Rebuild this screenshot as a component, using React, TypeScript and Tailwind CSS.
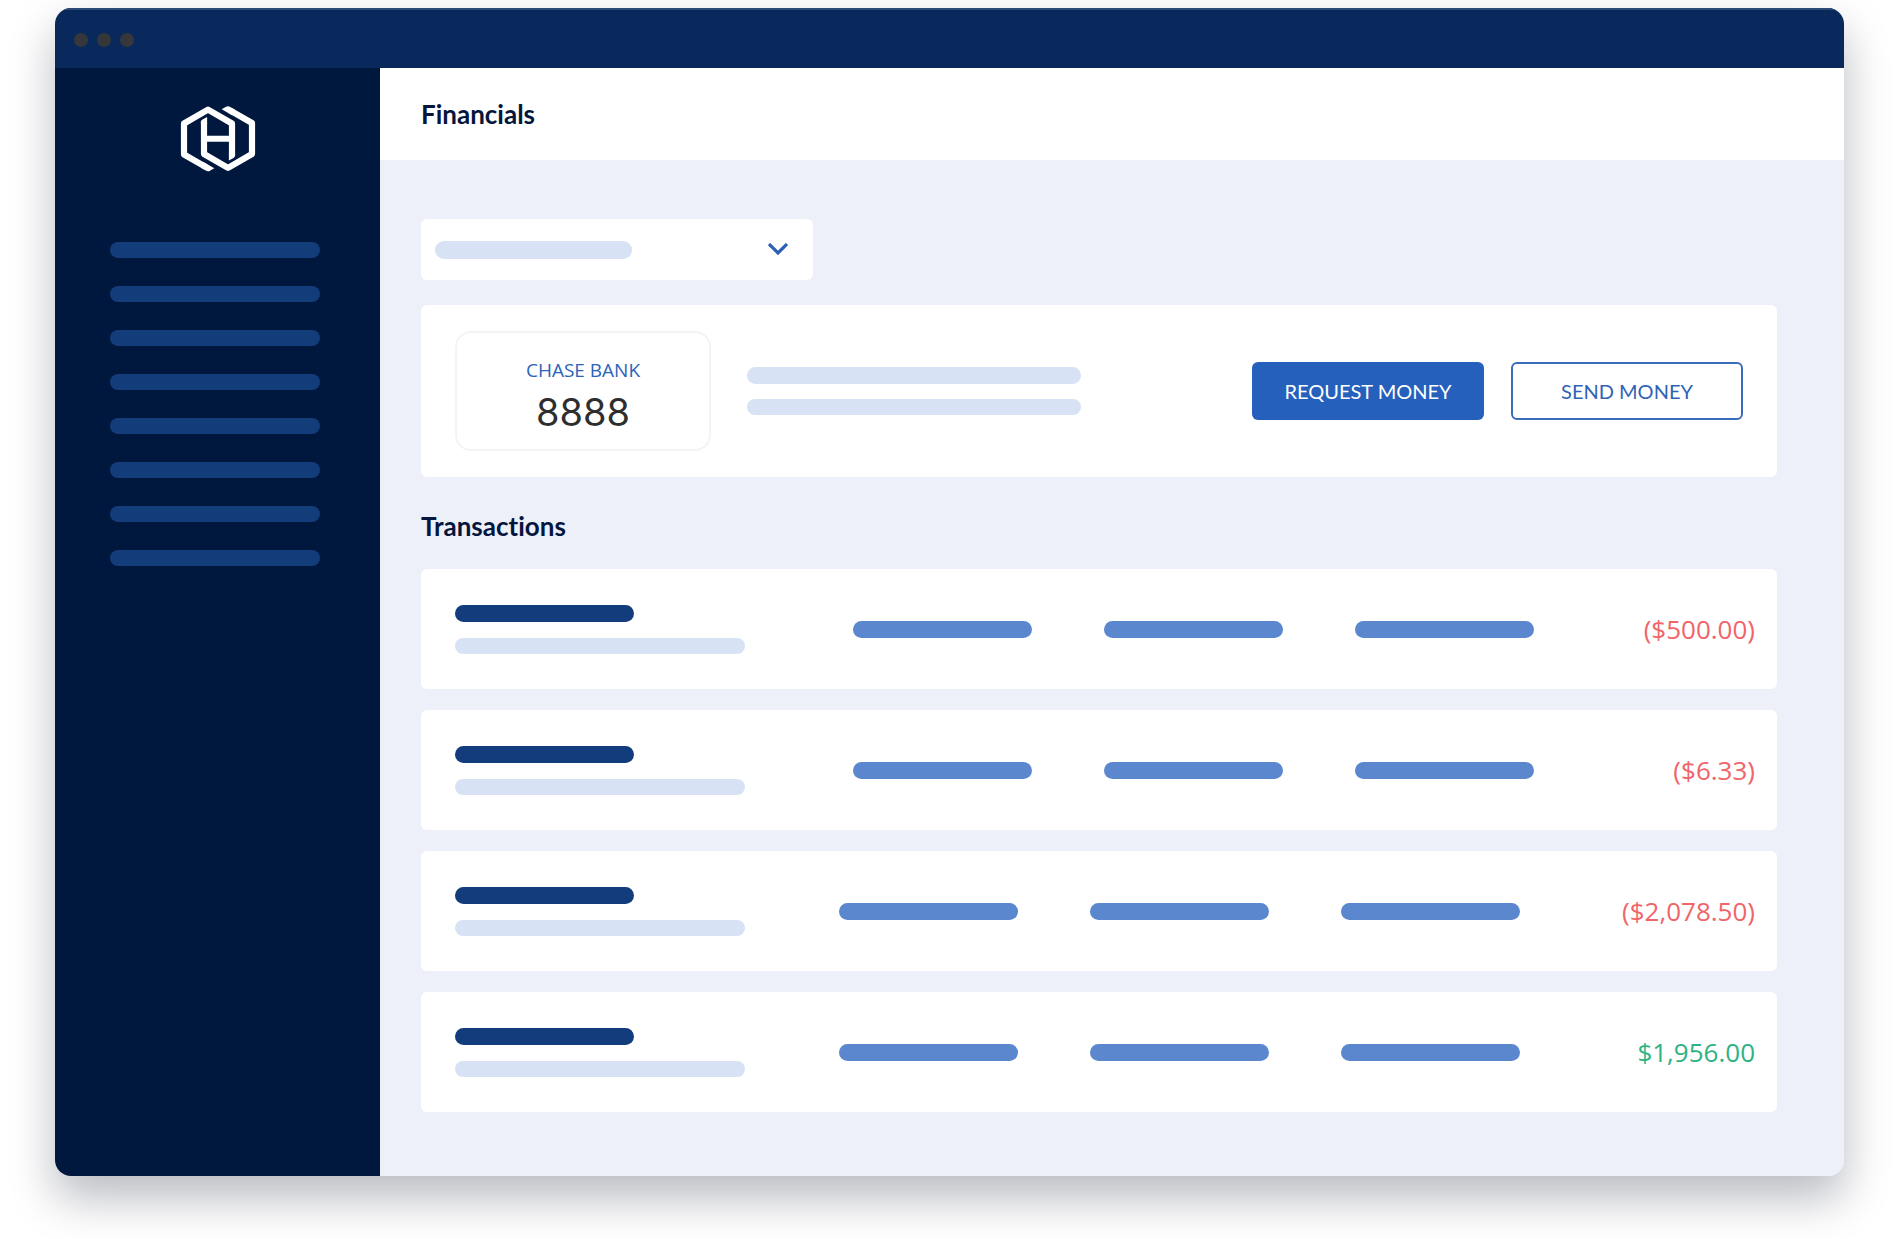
type Transaction = {
  id: number;
  amount: string;
  tone: string;
  amountColumn: string;
};

const transactions: Transaction[] = [
  { id: 1, amount: "($500.00)", tone: "text-[#f0646a]", amountColumn: "w-[221px]" },
  { id: 2, amount: "($6.33)", tone: "text-[#f0646a]", amountColumn: "w-[221px]" },
  { id: 3, amount: "($2,078.50)", tone: "text-[#f0646a]", amountColumn: "w-[235px]" },
  { id: 4, amount: "$1,956.00", tone: "text-[#2db284]", amountColumn: "w-[235px]" },
];

/** One open hexagon of the mark; the other one is the same shape turned by 180 degrees. */
function LogoHalf() {
  return (
    <>
      <path
        d="M50 4.4 L72 17 V48 L48 61.9 L24 48 V16.5"
        stroke="#fff"
        strokeWidth="6.2"
        strokeLinejoin="round"
      />
      <path d="M41.7 3.2 L46 0.8 Q48.2 -0.3 50.2 0.9 L55 3.7 L52.5 9.4 Z" fill="#fff" />
      <path d="M20.9 18 V15.5 Q21.3 14.3 22.5 13.6 L27.1 11 V18 Z" fill="#fff" />
    </>
  );
}

function Logo() {
  return (
    <svg width="76" height="66" viewBox="0 0 76 66" fill="none" role="img" aria-label="Logo">
      <LogoHalf />
      <g transform="rotate(180 38 32.75)">
        <LogoHalf />
      </g>
      <path d="M24 32.75 H52" stroke="#fff" strokeWidth="6.2" />
    </svg>
  );
}

function TitleBar() {
  return (
    <div className="flex h-[60px] items-center gap-[9px] border-t-2 border-[#2c4a76] bg-[#09295c] px-[19px] pt-px">
      <span className="size-[14px] rounded-full bg-[#35373a]" />
      <span className="size-[14px] rounded-full bg-[#35373a]" />
      <span className="size-[14px] rounded-full bg-[#35373a]" />
    </div>
  );
}

function Sidebar() {
  return (
    <aside className="flex w-[325px] shrink-0 flex-col bg-[#00183d] pt-[38px] pl-[55px]">
      <div className="flex w-[216px] justify-center">
        <Logo />
      </div>
      <nav className="mt-[70px] flex flex-col gap-7" aria-label="Main">
        {[1, 2, 3, 4, 5, 6, 7, 8].map((item) => (
          <span key={item} className="h-4 w-[210px] rounded-full bg-[#133c7a]" />
        ))}
      </nav>
    </aside>
  );
}

function AccountSelect() {
  return (
    <div className="relative h-[61px] w-[392px] rounded-md bg-white">
      <select
        aria-label="Account"
        className="size-full appearance-none rounded-md bg-transparent px-[14px]"
      >
        <option value="" />
      </select>
      <div className="pointer-events-none absolute inset-0 flex items-center justify-between pr-[25px] pl-[14px]">
        <span className="h-[18px] w-[197px] rounded-full bg-[#d7e2f4]" />
        <svg width="20" height="13" viewBox="0 0 20 13" fill="none" aria-hidden="true">
          <path d="M1 1 L10 10 L19 1" stroke="#2b5fb8" strokeWidth="3.2" />
        </svg>
      </div>
    </div>
  );
}

function AccountCard() {
  return (
    <section className="mt-[25px] flex h-[172px] items-center rounded-md bg-white px-[34px]">
      <div className="flex h-[120px] w-[256px] flex-col items-center justify-center rounded-2xl border-2 border-[#f4f4f5] pt-[14px]">
        <span className="text-[19px] leading-7 text-[#2b63b9]">CHASE BANK</span>
        <span className="font-['Inter',sans-serif] text-[38px] leading-[56px] text-[#2e2e2e]">
          8888
        </span>
      </div>
      <div className="ml-9 flex flex-col gap-[15px]">
        <span className="h-[17px] w-[334px] rounded-full bg-[#d7e2f4]" />
        <span className="h-4 w-[334px] rounded-full bg-[#d7e2f4]" />
      </div>
      <div className="ml-auto flex gap-[27px] font-['Lato',sans-serif]">
        <button
          type="button"
          className="h-[58px] w-[232px] rounded-md bg-[#2560bc] text-[20px] text-white"
        >
          REQUEST MONEY
        </button>
        <button
          type="button"
          className="h-[58px] w-[232px] rounded-md border-2 border-[#3a6cbc] bg-white text-[20px] text-[#3063b5]"
        >
          SEND MONEY
        </button>
      </div>
    </section>
  );
}

function TransactionRow({ transaction }: { transaction: Transaction }) {
  return (
    <li className="flex h-[120px] items-center rounded-md bg-white pr-[22px] pl-[34px]">
      <div className="flex flex-col gap-4">
        <span className="h-[17px] w-[179px] rounded-full bg-[#123c7b]" />
        <span className="h-4 w-[290px] rounded-full bg-[#d7e3f5]" />
      </div>
      <div className="flex flex-1 justify-end gap-[72px]">
        <span className="h-[17px] w-[179px] rounded-full bg-[#5b87cf]" />
        <span className="h-[17px] w-[179px] rounded-full bg-[#5b87cf]" />
        <span className="h-[17px] w-[179px] rounded-full bg-[#5b87cf]" />
      </div>
      <span
        className={`${transaction.amountColumn} ${transaction.tone} text-right text-[26px] leading-9`}
      >
        {transaction.amount}
      </span>
    </li>
  );
}

export default function App() {
  return (
    <div className="min-h-screen bg-white px-[55px] pt-2 pb-[63px] font-['Open_Sans',sans-serif]">
      <div className="overflow-hidden rounded-2xl shadow-[0_22px_46px_rgba(0,10,35,0.28)]">
        <TitleBar />
        <div className="flex">
          <Sidebar />
          <main className="flex-1 bg-[#edf0f9]">
            <header className="flex h-[92px] items-center bg-white px-[41px]">
              <h1 className="font-['Lato',sans-serif] text-[26px] leading-9 font-bold text-[#04163d] [font-variant-ligatures:none]">
                Financials
              </h1>
            </header>
            <div className="pt-[59px] pr-[67px] pb-16 pl-[41px]">
              <AccountSelect />
              <AccountCard />
              <h2 className="mt-[31px] mb-[25px] font-['Lato',sans-serif] text-[26px] leading-9 font-bold text-[#04163d] [font-variant-ligatures:none]">
                Transactions
              </h2>
              <ul className="flex flex-col gap-[21px]">
                {transactions.map((transaction) => (
                  <TransactionRow key={transaction.id} transaction={transaction} />
                ))}
              </ul>
            </div>
          </main>
        </div>
      </div>
    </div>
  );
}
